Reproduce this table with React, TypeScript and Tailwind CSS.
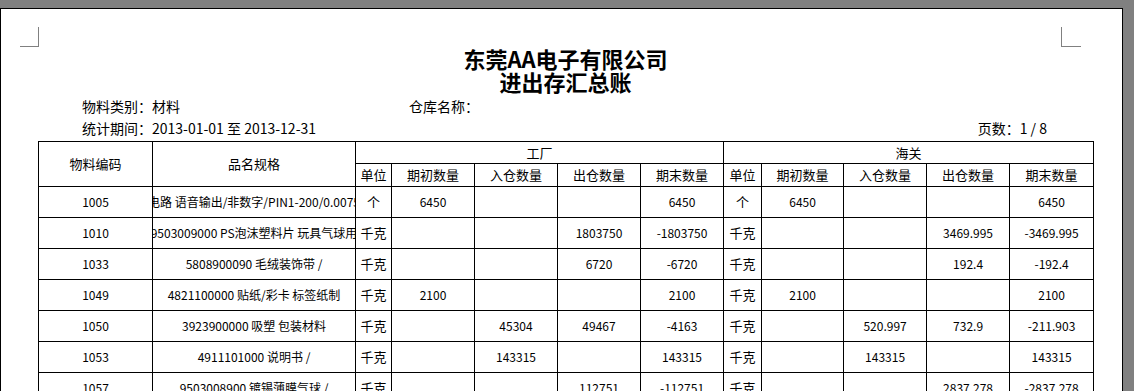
import React from 'react'

type Row = {
  code: string
  name: string
  unit: string
  f: [string, string, string, string]
  c: [string, string, string, string]
}

const rows: Row[] = [
  { code: '1005', name: '集成电路 语音输出/非数字/PIN1-200/0.0075g/片', unit: '个', f: ['6450', '', '', '6450'], c: ['6450', '', '', '6450'] },
  { code: '1010', name: '9503009000 PS泡沫塑料片 玩具气球用', unit: '千克', f: ['', '', '1803750', '-1803750'], c: ['', '', '3469.995', '-3469.995'] },
  { code: '1033', name: '5808900090 毛绒装饰带 /', unit: '千克', f: ['', '', '6720', '-6720'], c: ['', '', '192.4', '-192.4'] },
  { code: '1049', name: '4821100000 贴纸/彩卡 标签纸制', unit: '千克', f: ['2100', '', '', '2100'], c: ['2100', '', '', '2100'] },
  { code: '1050', name: '3923900000 吸塑 包装材料', unit: '千克', f: ['', '45304', '49467', '-4163'], c: ['', '520.997', '732.9', '-211.903'] },
  { code: '1053', name: '4911101000 说明书 /', unit: '千克', f: ['', '143315', '', '143315'], c: ['', '143315', '', '143315'] },
  { code: '1057', name: '9503008900 镀锡薄膜气球 /', unit: '千克', f: ['', '', '112751', '-112751'], c: ['', '', '2837.278', '-2837.278'] },
]

const qtyHeads = ['期初数量', '入仓数量', '出仓数量', '期末数量']

const td = 'border border-black p-0 text-center align-middle'

function Group({ unit, vals }: { unit: string; vals: string[] }) {
  return (
    <>
      <td className={`${td} text-[13px]`}>{unit}</td>
      {vals.map((v, i) => (
        <td key={i} className={`${td} text-[12px]`}>
          {v}
        </td>
      ))}
    </>
  )
}

export default function App() {
  return (
    <div className="h-[391px] w-[1134px] overflow-hidden bg-[#808080] pt-[8px] font-['Noto_Sans_CJK_SC',sans-serif] text-black">
      <div className="h-[400px] w-[1123px] border-x border-t border-black bg-white">
        {/* margin marks */}
        <div className="flex justify-between pl-[19px] pr-[41px] pt-[18px]">
          <div className="h-[20px] w-[19px] border-b border-r border-[#808080]" />
          <div className="h-[20px] w-[20px] border-b border-l border-[#808080]" />
        </div>

        <div className="ml-[37px] w-[1055px]">
          <div className="text-center text-[22px] font-bold leading-[23px]">
            <div>东莞AA电子有限公司</div>
            <div>进出存汇总账</div>
          </div>

          <div className="mt-[2px] text-[14px] leading-[22px]">
            <div className="flex pl-[44px]">
              <div className="w-[327px]">物料类别：材料</div>
              <div>仓库名称：</div>
            </div>
            <div className="flex justify-between pl-[44px] pr-[46px]">
              <div>统计期间：2013-01-01 至 2013-12-31</div>
              <div>页数：1 / 8</div>
            </div>
          </div>

          <table className="mt-[2px] w-[1055px] table-fixed border-collapse">
            <colgroup>
              <col className="w-[114px]" />
              <col className="w-[203px]" />
              <col className="w-[36px]" />
              <col className="w-[83px]" />
              <col className="w-[83px]" />
              <col className="w-[83px]" />
              <col className="w-[83px]" />
              <col className="w-[38px]" />
              <col className="w-[82px]" />
              <col className="w-[83px]" />
              <col className="w-[83px]" />
              <col className="w-[84px]" />
            </colgroup>
            <thead>
              <tr className="h-[22px] text-[13px]">
                <td rowSpan={2} className={td}>物料编码</td>
                <td rowSpan={2} className={td}>品名规格</td>
                <td colSpan={5} className={td}>工厂</td>
                <td colSpan={5} className={td}>海关</td>
              </tr>
              <tr className="h-[23px] text-[13px]">
                <td className={td}>单位</td>
                {qtyHeads.map((h) => (
                  <td key={'f' + h} className={td}>{h}</td>
                ))}
                <td className={td}>单位</td>
                {qtyHeads.map((h) => (
                  <td key={'c' + h} className={td}>{h}</td>
                ))}
              </tr>
            </thead>
            <tbody>
              {rows.map((r) => (
                <tr key={r.code} className="h-[31px]">
                  <td className={`${td} text-[12px]`}>{r.code}</td>
                  <td className={td}>
                    <div className="flex justify-center overflow-hidden whitespace-nowrap text-[12px]">
                      {r.name}
                    </div>
                  </td>
                  <Group unit={r.unit} vals={r.f} />
                  <Group unit={r.unit} vals={r.c} />
                </tr>
              ))}
            </tbody>
          </table>
        </div>
      </div>
    </div>
  )
}
